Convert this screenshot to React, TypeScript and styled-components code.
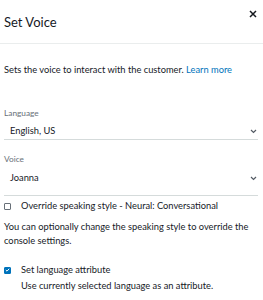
import { FC } from 'react'
import styled, { createGlobalStyle } from 'styled-components'

const TEXT = '#16191f'
const MUTED = '#687078'
const LINK = '#0073bb'
const BODY_SIZE = '9.3px'

const GlobalStyles = createGlobalStyle`
  html, body {
    margin: 0;
    padding: 0;
    background: #fff;
  }
  body, body * {
    box-sizing: border-box;
    font-family: Lato, 'Liberation Sans', sans-serif;
    color: ${TEXT};
  }
`

const Panel = styled.div`
  width: 263px;
  height: 300px;
  overflow: hidden;
  display: flex;
  flex-direction: column;
`

const Header = styled.div`
  height: 44px;
  display: flex;
  align-items: flex-start;
  justify-content: space-between;
  padding: 13px 6px 0 4px;
  border-bottom: 1px solid #eaeded;
`

const Title = styled.h2`
  margin: 0;
  font-size: 13px;
  font-weight: 400;
  line-height: 18px;
`

const CloseButton = styled.button`
  border: 0;
  background: none;
  padding: 0;
  margin-top: -4px;
  width: 9px;
  height: 9px;
  display: flex;
  align-items: center;
  justify-content: center;
  cursor: pointer;
`

const Body = styled.div`
  padding: 19px 5px 0 4px;
  display: flex;
  flex-direction: column;
`

const Description = styled.p`
  margin: 0 0 30px;
  font-size: ${BODY_SIZE};
  line-height: 14px;
  white-space: nowrap;
`

const LinkText = styled.a`
  && {
    color: ${LINK};
  }
  text-decoration: none;
`

const Field = styled.div<{ after: number }>`
  display: flex;
  flex-direction: column;
  margin-bottom: ${(p) => p.after}px;
`

const Label = styled.label`
  font-size: 8.3px;
  line-height: 12px;
  && {
    color: ${MUTED};
  }
`

const SelectRow = styled.div<{ gap: number; pad: number }>`
  display: flex;
  align-items: center;
  justify-content: space-between;
  margin-top: ${(p) => p.gap}px;
  padding: 0 1px ${(p) => p.pad}px 6px;
  border-bottom: 1px solid #d5dbdb;
  font-size: ${BODY_SIZE};
  line-height: 14px;
`

const CheckRow = styled.div<{ top: number }>`
  display: flex;
  align-items: center;
  gap: 10px;
  font-size: ${BODY_SIZE};
  line-height: 14px;
  margin-top: ${(p) => p.top}px;
`

const Box = styled.span<{ checked?: boolean }>`
  width: 7px;
  height: 7px;
  border: 1px solid ${(p) => (p.checked ? LINK : '#687078')};
  background: ${(p) => (p.checked ? LINK : '#fff')};
  border-radius: 1px;
  display: flex;
  align-items: center;
  justify-content: center;
  flex-shrink: 0;
`

const Hint = styled.p<{ top: number; indent?: boolean }>`
  margin: ${(p) => p.top}px 0 0;
  font-size: ${BODY_SIZE};
  line-height: 14px;
  padding-left: ${(p) => (p.indent ? '17px' : '0')};
`

const Chevron: FC = () => (
  <svg width="7" height="5" viewBox="0 0 7 5">
    <path d="M1 1l2.5 2.5L6 1" fill="none" stroke="#545b64" strokeWidth="1.2" />
  </svg>
)

type SelectProps = { label: string; value: string; gap: number; pad: number; after: number }

const Select: FC<SelectProps> = ({ label, value, gap, pad, after }) => (
  <Field after={after}>
    <Label>{label}</Label>
    <SelectRow gap={gap} pad={pad}>
      <span>{value}</span>
      <Chevron />
    </SelectRow>
  </Field>
)

export default function App() {
  return (
    <Panel>
      <GlobalStyles />
      <Header>
        <Title>Set Voice</Title>
        <CloseButton aria-label="Close">
          <svg width="8" height="8" viewBox="0 0 8 8">
            <path d="M1 1l6 6M7 1L1 7" stroke={TEXT} strokeWidth="1.5" />
          </svg>
        </CloseButton>
      </Header>

      <Body>
        <Description>
          Sets the voice to interact with the customer. <LinkText href="#">Learn more</LinkText>
        </Description>

        <Select label="Language" value="English, US" gap={5} pad={1} after={13} />
        <Select label="Voice" value="Joanna" gap={6} pad={10} after={3} />

        <CheckRow top={0}>
          <Box />
          <span>Override speaking style - Neural: Conversational</span>
        </CheckRow>
        <Hint top={7}>
          You can optionally change the speaking style to override the console settings.
        </Hint>

        <CheckRow top={15}>
          <Box checked>
            <svg width="6" height="6" viewBox="0 0 6 6">
              <path d="M1 3l1.4 1.4L5 1.5" fill="none" stroke="#fff" strokeWidth="1.2" />
            </svg>
          </Box>
          <span>Set language attribute</span>
        </CheckRow>
        <Hint indent top={2}>
          Use currently selected language as an attribute.
        </Hint>
      </Body>
    </Panel>
  )
}
